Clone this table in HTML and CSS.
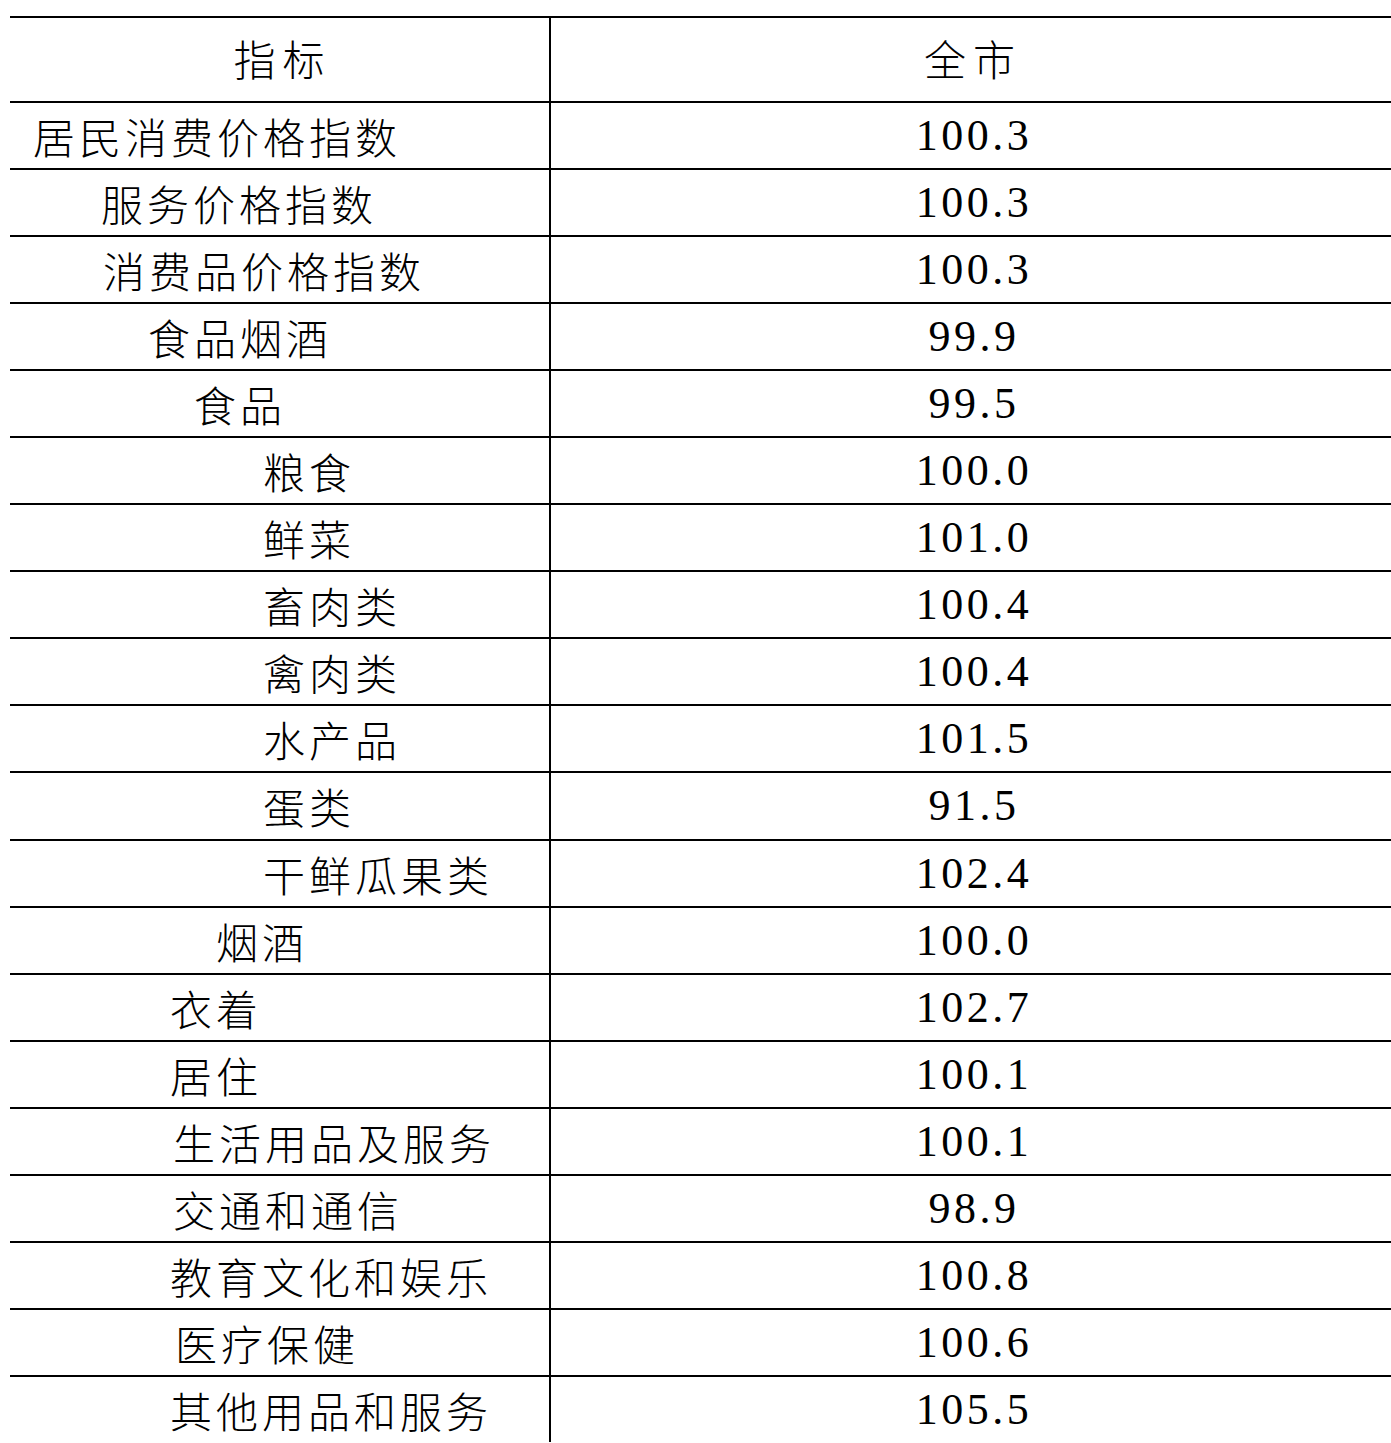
FILE: index.html
```html
<!DOCTYPE html>
<html lang="zh-CN">
<head>
<meta charset="utf-8">
<title>居民消费价格指数</title>
<link rel="stylesheet" href="styles.css">
</head>
<body>
<div class="table">
  <div class="row head"><div class="name center">指标</div><div class="val cjk">全市</div></div>
  <div class="row"><div class="name lv0">居民消费价格指数</div><div class="val">100.3</div></div>
  <div class="row"><div class="name lv1a">服务价格指数</div><div class="val">100.3</div></div>
  <div class="row"><div class="name lv1b">消费品价格指数</div><div class="val">100.3</div></div>
  <div class="row"><div class="name lv2">食品烟酒</div><div class="val">99.9</div></div>
  <div class="row"><div class="name lv3">食品</div><div class="val">99.5</div></div>
  <div class="row"><div class="name lv4">粮食</div><div class="val">100.0</div></div>
  <div class="row"><div class="name lv4">鲜菜</div><div class="val">101.0</div></div>
  <div class="row"><div class="name lv4">畜肉类</div><div class="val">100.4</div></div>
  <div class="row"><div class="name lv4">禽肉类</div><div class="val">100.4</div></div>
  <div class="row"><div class="name lv4">水产品</div><div class="val">101.5</div></div>
  <div class="row"><div class="name lv4">蛋类</div><div class="val">91.5</div></div>
  <div class="row"><div class="name lv4">干鲜瓜果类</div><div class="val">102.4</div></div>
  <div class="row"><div class="name lv3b">烟酒</div><div class="val">100.0</div></div>
  <div class="row"><div class="name lv2b">衣着</div><div class="val">102.7</div></div>
  <div class="row"><div class="name lv2b">居住</div><div class="val">100.1</div></div>
  <div class="row"><div class="name lv2c">生活用品及服务</div><div class="val">100.1</div></div>
  <div class="row"><div class="name lv2c">交通和通信</div><div class="val">98.9</div></div>
  <div class="row"><div class="name lv2b">教育文化和娱乐</div><div class="val">100.8</div></div>
  <div class="row"><div class="name lv2d">医疗保健</div><div class="val">100.6</div></div>
  <div class="row"><div class="name lv2b">其他用品和服务</div><div class="val">105.5</div></div>
</div>
</body>
</html>
```
FILE: styles.css
```css
html, body {
  margin: 0;
  padding: 0;
  background: #fff;
  color: #000;
}
body {
  padding: 16px 0 0 10px;
}
.table {
  width: 1381px;
}
.row {
  display: grid;
  grid-template-columns: 539px 1fr;
  box-sizing: border-box;
  height: 67.1px;
  border-top: 2px solid #000;
}
.row.head {
  height: 84.5px;
}
.name, .val {
  display: flex;
  align-items: center;
  font-family: "Noto Sans CJK SC", sans-serif;
  font-weight: 300;
  font-size: 42px;
  letter-spacing: 4px;
  white-space: nowrap;
}
.val {
  justify-content: center;
  border-left: 2px solid #000;
  font-family: "Liberation Serif", "Noto Sans CJK SC", serif;
  font-weight: 400;
  font-size: 44px;
  letter-spacing: 3.5px;
  padding-left: 6px;
}
.val.cjk {
  font-family: "Noto Sans CJK SC", sans-serif;
  font-weight: 300;
  font-size: 42px;
  letter-spacing: 7px;
  padding-left: 4px;
  padding-bottom: 4px;
}
.name.center {
  justify-content: center;
  letter-spacing: 7px;
  padding-left: 6px;
  padding-bottom: 4px;
}
.lv0 { padding-left: 23px; }
.lv1a { padding-left: 91px; }
.lv1b { padding-left: 93px; }
.lv2 { padding-left: 138px; }
.lv3 { padding-left: 184px; }
.lv4 { padding-left: 253px; }
.lv3b { padding-left: 206px; }
.lv2b { padding-left: 160px; }
.lv2c { padding-left: 163px; }
.lv2d { padding-left: 165px; }
```
